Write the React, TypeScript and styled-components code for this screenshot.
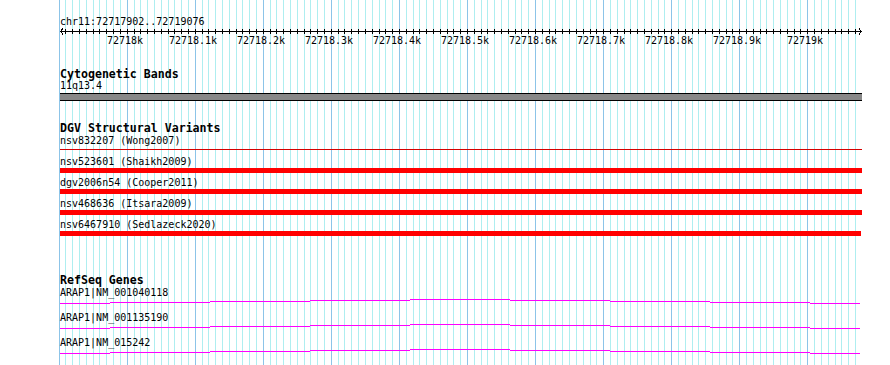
import styled, { createGlobalStyle } from "styled-components"

const START = 72717902
const ORIGIN = 60.5
const PX_PER_BP = 0.6806
const LEFT = 60
const RIGHT = 862

const toX = (bp: number) => Math.floor(ORIGIN + (bp - START) * PX_PER_BP)

const gridStops: number[] = []
for (let bp = 72717900; bp <= 72719070; bp += 10) gridStops.push(bp)

const majorLabel = (bp: number) => {
    const k = bp / 1000
    return Number.isInteger(k) ? `${k}k` : `${k.toFixed(1)}k`
}

const dgvRows = [
    { label: "nsv832207 (Wong2007)", thin: true, end: 862 },
    { label: "nsv523601 (Shaikh2009)", thin: false, end: 862 },
    { label: "dgv2006n54 (Cooper2011)", thin: false, end: 862 },
    { label: "nsv468636 (Itsara2009)", thin: false, end: 862 },
    { label: "nsv6467910 (Sedlazeck2020)", thin: false, end: 861 },
]

const genes = ["ARAP1|NM_001040118", "ARAP1|NM_001135190", "ARAP1|NM_015242"]

// intron line, stepping 1px per 100px block like the reference
const geneSteps = [60, 110, 210, 310, 410, 510, 610, 710, 810, 860]

const GlobalStyle = createGlobalStyle`
    html, body {
        margin: 0;
        padding: 0;
        background: #fff;
    }
`

const Page = styled.div`
    position: relative;
    width: 890px;
    height: 365px;
    overflow: hidden;
    background: #fff;
    font-family: "DejaVu Sans Mono", "Liberation Mono", monospace;
    color: #000;
`

const Grid = styled.svg`
    position: absolute;
    left: 0;
    top: 0;
`

const Tracks = styled.div`
    position: relative;
    display: flex;
    flex-direction: column;
    padding-top: 16px;
`

const Label = styled.div`
    padding-left: ${LEFT}px;
    font-size: 10px;
    line-height: 11px;
    height: 11px;
    white-space: nowrap;
`

const TrackTitle = styled.div<{ $gap: number }>`
    margin-top: ${props => props.$gap}px;
    padding-left: ${LEFT}px;
    font-size: 11.6px;
    font-weight: bold;
    line-height: 12px;
    height: 12px;
    white-space: nowrap;
`

const Ruler = styled.svg`
    display: block;
    font-family: "DejaVu Sans Mono", "Liberation Mono", monospace;
    font-size: 10px;
`

const Band = styled.div`
    margin: 2px 0 0 ${LEFT}px;
    width: ${RIGHT - LEFT}px;
    height: 6px;
    background: #888;
    border-top: 1px solid #000;
    border-bottom: 1px solid #000;
`

const FeatureList = styled.div`
    margin-top: 1px;
    display: flex;
    flex-direction: column;
`

const FeatureRow = styled.div`
    display: flex;
    flex-direction: column;
`

const Slot = styled.div`
    display: flex;
    flex-direction: column;
    height: 10px;
`

const VariantBar = styled.div<{ $thin: boolean; $width: number }>`
    margin-left: ${LEFT}px;
    margin-top: ${props => (props.$thin ? 3 : 1)}px;
    width: ${props => props.$width}px;
    height: ${props => (props.$thin ? 1 : 5)}px;
    background: ${props => (props.$thin ? "#d40000" : "#ff0000")};
`

const GeneLine = styled.svg`
    display: block;
`

export default function App() {
    return (
        <>
            <GlobalStyle />
            <Page>
                <Grid width={890} height={365}>
                    {gridStops.map(bp => (
                        <rect
                            key={bp}
                            x={toX(bp)}
                            y={0}
                            width={1}
                            height={365}
                            fill={bp % 100 === 0 ? "#8cc4e8" : "#aeeef0"}
                        />
                    ))}
                </Grid>
                <Tracks>
                    <Label>chr11:72717902..72719076</Label>
                    <Ruler width={890} height={20} shapeRendering="crispEdges">
                        <rect x={LEFT} y={4} width={RIGHT - LEFT} height={1} fill="#000" />
                        {gridStops.slice(1).map(bp => (
                            <rect key={bp} x={toX(bp)} y={2} width={1} height={5} fill="#000" />
                        ))}
                        <polyline points={`${LEFT + 3},1.5 ${LEFT + 0.5},4.5 ${LEFT + 3},7.5`} fill="none" stroke="#000" strokeWidth={1} />
                        <polyline points={`${RIGHT - 3},1.5 ${RIGHT - 0.5},4.5 ${RIGHT - 3},7.5`} fill="none" stroke="#000" strokeWidth={1} />
                        {gridStops.filter(bp => bp % 100 === 0 && bp > 72717900).map(bp => (
                            <text key={bp} x={toX(bp) - 2} y={17} textAnchor="middle" fill="#000">
                                {majorLabel(bp)}
                            </text>
                        ))}
                    </Ruler>

                    <TrackTitle $gap={21}>Cytogenetic Bands</TrackTitle>
                    <Label>11q13.4</Label>
                    <Band />

                    <TrackTitle $gap={21}>DGV Structural Variants</TrackTitle>
                    <FeatureList>
                        {dgvRows.map(row => (
                            <FeatureRow key={row.label}>
                                <Label>{row.label}</Label>
                                <Slot>
                                    <VariantBar $thin={row.thin} $width={row.end - LEFT} />
                                </Slot>
                            </FeatureRow>
                        ))}
                    </FeatureList>

                    <TrackTitle $gap={34}>RefSeq Genes</TrackTitle>
                    <FeatureList>
                        {genes.map(name => (
                            <FeatureRow key={name}>
                                <Label>{name}</Label>
                                <GeneLine width={890} height={14} shapeRendering="crispEdges">
                                    {geneSteps.slice(0, -1).map((x0, k) => (
                                        <rect
                                            key={x0}
                                            x={x0}
                                            y={5 - (4 - Math.abs(k - 4))}
                                            width={geneSteps[k + 1] - x0}
                                            height={1}
                                            fill="#ff00ff"
                                        />
                                    ))}
                                </GeneLine>
                            </FeatureRow>
                        ))}
                    </FeatureList>
                </Tracks>
            </Page>
        </>
    )
}
